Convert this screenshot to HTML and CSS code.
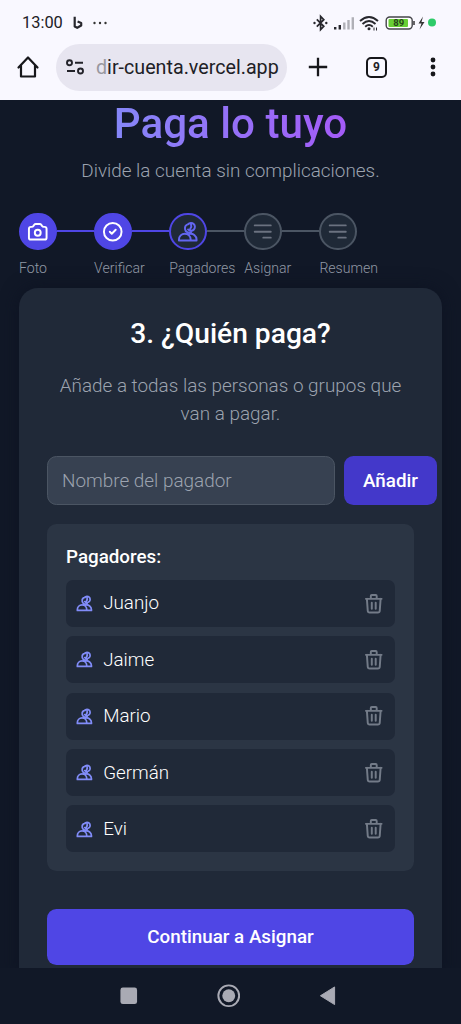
FILE: index.html
```html
<!DOCTYPE html>
<html lang="es">
<head>
<meta charset="utf-8">
<meta name="viewport" content="width=device-width, initial-scale=1">
<title>Paga lo tuyo</title>
<link rel="stylesheet" href="styles.css">
</head>
<body>
<svg class="defs" aria-hidden="true">
  <symbol id="users" viewBox="0 0 24 24"><path d="M12.300 4.354a4 4 0 1 1 0 5.292M15 21H3v-1a6 6 0 0 1 12 0v1zm0 0h6v-1a6 6 0 0 0-7.500-5.800M13 4.200C10 4.700 8.900 7 9.200 9.400c.4 2.900 3.300 4.300 6.300 3M15.300 4.500c.8 1.800.5 3-.8 4.500"/></symbol>
  <symbol id="trash" viewBox="0 0 24 24"><path d="M19 7l-.867 12.142A2 2 0 0 1 16.138 21H7.862a2 2 0 0 1-1.995-1.858L5 7m5 4v6m4-6v6m1-10V4a1 1 0 0 0-1-1h-4a1 1 0 0 0-1 1v3M4 7h16"/></symbol>
  <symbol id="lines" viewBox="0 0 24 24"><path d="M3.750 5.500h16.500M3.750 12h16.500M12.500 18h7.750"/></symbol>
</svg>
<div class="phone">
  <div class="chrome">
    <div class="status">
      <span class="time">13:00</span>
      <svg class="bing" viewBox="0 0 10 13"><path d="M1.700.8v9.700l2.500 1.300 4-2.300V7L4.600 5.500" fill="none" stroke="#27272d" stroke-width="2.200" stroke-linejoin="round"/></svg>
      <svg class="dots" viewBox="0 0 14 4"><g fill="#333"><circle cx="1.500" cy="2" r="1.200"/><circle cx="7" cy="2" r="1.200"/><circle cx="12.500" cy="2" r="1.200"/></g></svg>
      <svg class="signals" viewBox="0 0 126 18">
        <g fill="none" stroke="#27272d" stroke-width="1.700"><path d="M3.800 5.300l7 7-3.200 3.300V2.400l3.200 3.300-7 7"/></g>
        <circle cx="1.500" cy="9" r="1.200" fill="#27272d"/><circle cx="13.300" cy="9" r="1.200" fill="#27272d"/>
        <path d="M22.200 13v2.500M26.800 11v4.500" stroke="#27272d" stroke-width="2.400"/>
        <path d="M31.300 8.500v7M35.500 6v9.500M39.800 3.300v12.200" stroke="#b0b0b7" stroke-width="2.400"/>
        <g fill="none" stroke="#27272d" stroke-width="1.900"><path d="M47 7q9-8 18 0M49.500 10q6.500-5.800 13 0M52.200 12.700q3.800-3.300 7.600 0"/></g>
        <circle cx="56" cy="14.800" r="1.500" fill="#27272d"/><path d="M61 13.500v3M63.500 13.500v3" stroke="#27272d"/>
        <rect x="73.200" y="3" width="26" height="12" rx="3.500" fill="#fff" stroke="#44444a" stroke-width="1.400"/>
        <rect x="75.500" y="5" width="19.500" height="8" rx="1" fill="#69cf35"/><path d="M101 7v4" stroke="#333" stroke-width="1.500"/>
        <text x="85.800" y="12.300" class="battery-text">89</text>
        <path d="M110 2.500l-4.500 7h3l-2 6 5-7.500h-3z" fill="#333"/><circle cx="119" cy="8.500" r="4" fill="#2ecb69"/>
      </svg>
    </div>
    <div class="toolbar">
      <svg class="home" viewBox="0 0 24 24"><path d="M2.500 12.500L12 2.500l9.500 10M5 10.500V21.500h14V10.500" fill="none" stroke="#17171b" stroke-width="2.200" stroke-linecap="round" stroke-linejoin="round"/></svg>
      <div class="address">
        <svg class="tune" viewBox="0 0 20 18"><g fill="none" stroke="#222229" stroke-width="1.900"><circle cx="4.500" cy="4.800" r="2.500"/><path d="M10 4.800h8M2 13h8"/><circle cx="15.500" cy="13" r="2.500"/></g></svg>
        <span class="url"><span class="fade">d</span>ir-cuenta.vercel.app</span>
      </div>
      <svg class="plus" viewBox="0 0 20 20"><path d="M10 .8v18.400M.8 10h18.400" stroke="#17171b" stroke-width="2.300"/></svg>
      <span class="tabs">9</span>
      <svg class="more" viewBox="0 0 6 20"><g fill="#17171b"><circle cx="3" cy="3" r="2.400"/><circle cx="3" cy="10" r="2.400"/><circle cx="3" cy="17" r="2.400"/></g></svg>
    </div>
  </div>
  <main class="app">
    <header>
      <h1>Paga lo tuyo</h1>
      <p class="tagline">Divide la cuenta sin complicaciones.</p>
    </header>
    <ol class="steps">
      <li class="step done"><div class="track"><span class="bubble"><svg class="icon" viewBox="0 0 24 24"><path d="M3 9a2 2 0 0 1 2-2h.93a2 2 0 0 0 1.664-.89l.812-1.220A2 2 0 0 1 10.070 4h3.860a2 2 0 0 1 1.664.89l.812 1.220A2 2 0 0 0 18.070 7H19a2 2 0 0 1 2 2v9a2 2 0 0 1-2 2H5a2 2 0 0 1-2-2V9z"/><circle cx="12" cy="13" r="3"/></svg></span></div><span class="label">Foto</span></li>
      <li class="step done"><div class="track"><span class="bubble"><svg class="icon" viewBox="0 0 24 24"><path d="M9 12l2 2 4-4m6 2a9 9 0 1 1-18 0 9 9 0 0 1 18 0z"/></svg></span></div><span class="label">Verificar</span></li>
      <li class="step current"><div class="track"><span class="bubble"><svg class="icon"><use href="#users"/></svg></span></div><span class="label">Pagadores</span></li>
      <li class="step"><div class="track"><span class="bubble"><svg class="icon thin"><use href="#lines"/></svg></span></div><span class="label">Asignar</span></li>
      <li class="step"><div class="track"><span class="bubble"><svg class="icon thin"><use href="#lines"/></svg></span></div><span class="label">Resumen</span></li>
    </ol>
    <section class="card">
      <h2>3. ¿Quién paga?</h2>
      <p class="intro">Añade a todas las personas o grupos que van a pagar.</p>
      <form class="add">
        <input class="name" type="text" placeholder="Nombre del pagador">
        <button class="add-button" type="button">Añadir</button>
      </form>
      <div class="panel">
        <h3>Pagadores:</h3>
        <ul class="people">
          <li class="person"><svg class="who"><use href="#users"/></svg><span class="person-name">Juanjo</span><svg class="trash"><use href="#trash"/></svg></li>
          <li class="person"><svg class="who"><use href="#users"/></svg><span class="person-name">Jaime</span><svg class="trash"><use href="#trash"/></svg></li>
          <li class="person"><svg class="who"><use href="#users"/></svg><span class="person-name">Mario</span><svg class="trash"><use href="#trash"/></svg></li>
          <li class="person"><svg class="who"><use href="#users"/></svg><span class="person-name">Germán</span><svg class="trash"><use href="#trash"/></svg></li>
          <li class="person"><svg class="who"><use href="#users"/></svg><span class="person-name">Evi</span><svg class="trash"><use href="#trash"/></svg></li>
        </ul>
      </div>
      <button class="continue" type="button">Continuar a Asignar</button>
    </section>
  </main>
  <nav class="navbar">
    <svg viewBox="0 0 24 24"><rect x="3.500" y="3.500" width="17" height="17" rx="2.500" fill="#a9aab4"/></svg>
    <svg viewBox="0 0 24 24"><circle cx="12" cy="12" r="10.600" fill="none" stroke="#a9aab4" stroke-width="2"/><circle cx="12" cy="12" r="6.600" fill="#a9aab4"/></svg>
    <svg viewBox="0 0 24 24"><path d="M4.500 12L19 3v18z" fill="#a9aab4" stroke="#a9aab4" stroke-linejoin="round"/></svg>
  </nav>
</div>
</body>
</html>
```
FILE: styles.css
```css
* { box-sizing: border-box; margin: 0; padding: 0; }
body { font-family: Roboto, sans-serif; background: #111827; color: #fff; overflow: hidden; }
svg { display: block; flex-shrink: 0; }
ul, ol { list-style: none; }
.defs { display: none; }
.phone { display: flex; flex-direction: column; width: 461px; height: 1024px; }
.chrome { height: 100px; background: #f9f8ff; color: #202025; flex-shrink: 0; }
.status { display: flex; align-items: center; height: 43px; padding: 2px 22px 0; }
.time { font-size: 16.4px; width: 51px; }
.bing { width: 10px; height: 13px; }
.dots { width: 14px; height: 4px; margin-left: 10px; }
.signals { width: 126px; height: 18px; margin-left: auto; }
.battery-text { font: 700 9.5px Roboto, sans-serif; fill: #26451a; text-anchor: middle; }
.toolbar { display: flex; align-items: center; height: 48px; padding-left: 16px; }
.home { width: 24px; height: 24px; }
.address { display: flex; align-items: center; width: 231px; height: 47px; margin-left: 16px; padding-left: 9px; border-radius: 24px; background: #e7e5f0; }
.tune { width: 20px; height: 18px; }
.url { margin-left: 11px; font-size: 19.7px; white-space: nowrap; }
.fade { color: #98979f; }
.plus { width: 20px; height: 20px; margin-left: 21px; }
.tabs { display: grid; place-items: center; width: 21px; height: 21px; margin-left: 38px; border: 2.3px solid #17171b; border-radius: 5px; font-size: 12px; font-weight: 700; }
.more { width: 6px; height: 20px; margin-left: 43px; }
.app { height: 868px; overflow: hidden; padding: 0 19px; flex-shrink: 0; }
header { text-align: center; }
h1 { width: 423px; height: 47px; background: linear-gradient(90deg, #818cf8 15%, #a855f7 85%); background-clip: text; -webkit-background-clip: text; color: transparent; font-size: 42.2px; font-weight: 500; line-height: 47px; }
.tagline { margin-top: 10px; color: #9ca3af; font-size: 18.9px; font-weight: 300; line-height: 28px; }
.steps { display: flex; margin-top: 27.5px; }
.step { width: 75.1px; color: #6b7280; }
.track { display: flex; align-items: center; }
.track::after { content: ""; flex: 1; height: 2.4px; background: #4b5563; }
.step:last-child .track::after { display: none; }
.done .track::after { background: #4f46e5; }
.bubble { display: grid; place-items: center; width: 37.6px; height: 37.6px; flex-shrink: 0; border: 2.4px solid #4b5563; border-radius: 50%; background: #1f2937; }
.done .bubble { border-color: #4f46e5; background: #4f46e5; color: #fff; }
.current .bubble { border-color: #4f46e5; color: #6366f1; }
.icon { width: 23.5px; height: 23.5px; fill: none; stroke: currentColor; stroke-width: 2; stroke-linecap: round; stroke-linejoin: round; }
.thin { stroke-width: 1.8; }
.label { display: block; margin-top: 8.5px; color: #9098a5; font-size: 14.1px; font-weight: 300; line-height: 19px; white-space: nowrap; }
.card { height: 690px; margin-top: 10px; padding: 27px 28px 28px; border-radius: 19px 19px 0 0; background: #202938; box-shadow: 0 0 18px #0d1322; }
h2 { text-align: center; font-size: 28.2px; font-weight: 500; line-height: 37px; }
.intro { margin: 20px -2px 0; text-align: center; color: #9ca3af; font-size: 18.9px; font-weight: 300; line-height: 28.2px; }
.add { display: flex; gap: 9px; width: 390px; margin-top: 28px; }
.name { width: 288px; height: 49px; padding: 0 14px; border: 1.2px solid #4b5563; border-radius: 9.4px; background: #374151; font: 300 18.9px Roboto, sans-serif; }
.name::placeholder { color: #9ca3af; opacity: 1; }
.add-button, .continue { border: 0; border-radius: 9.4px; color: #fff; font: 500 18.8px Roboto, sans-serif; }
.add-button { width: 93px; height: 49px; background: #4338ca; }
.panel { height: 347px; margin-top: 18.5px; padding: 19px; border-radius: 9.4px; background: #2b3544; }
h3 { font-size: 18.8px; font-weight: 500; line-height: 28px; }
.people { display: grid; gap: 9.4px; margin-top: 9.4px; }
.person { display: flex; align-items: center; height: 47px; padding: 0 9.4px; border-radius: 7px; background: #202938; }
.who, .trash { fill: none; stroke-width: 2; stroke-linecap: round; stroke-linejoin: round; }
.who { width: 18.8px; height: 18.8px; color: #818cf8; stroke: currentColor; stroke-width: 2.2; }
.person-name { flex: 1; margin-left: 9px; font-size: 18.8px; font-weight: 300; }
.trash { width: 23.5px; height: 23.5px; stroke: #737b88; }
.continue { display: block; width: 367px; height: 56px; margin-top: 38px; background: #4f46e5; }
.navbar { display: flex; justify-content: center; align-items: center; gap: 76px; height: 56px; padding-right: 4px; background: #111827; }
.navbar svg { width: 23.5px; height: 23.5px; }
```
